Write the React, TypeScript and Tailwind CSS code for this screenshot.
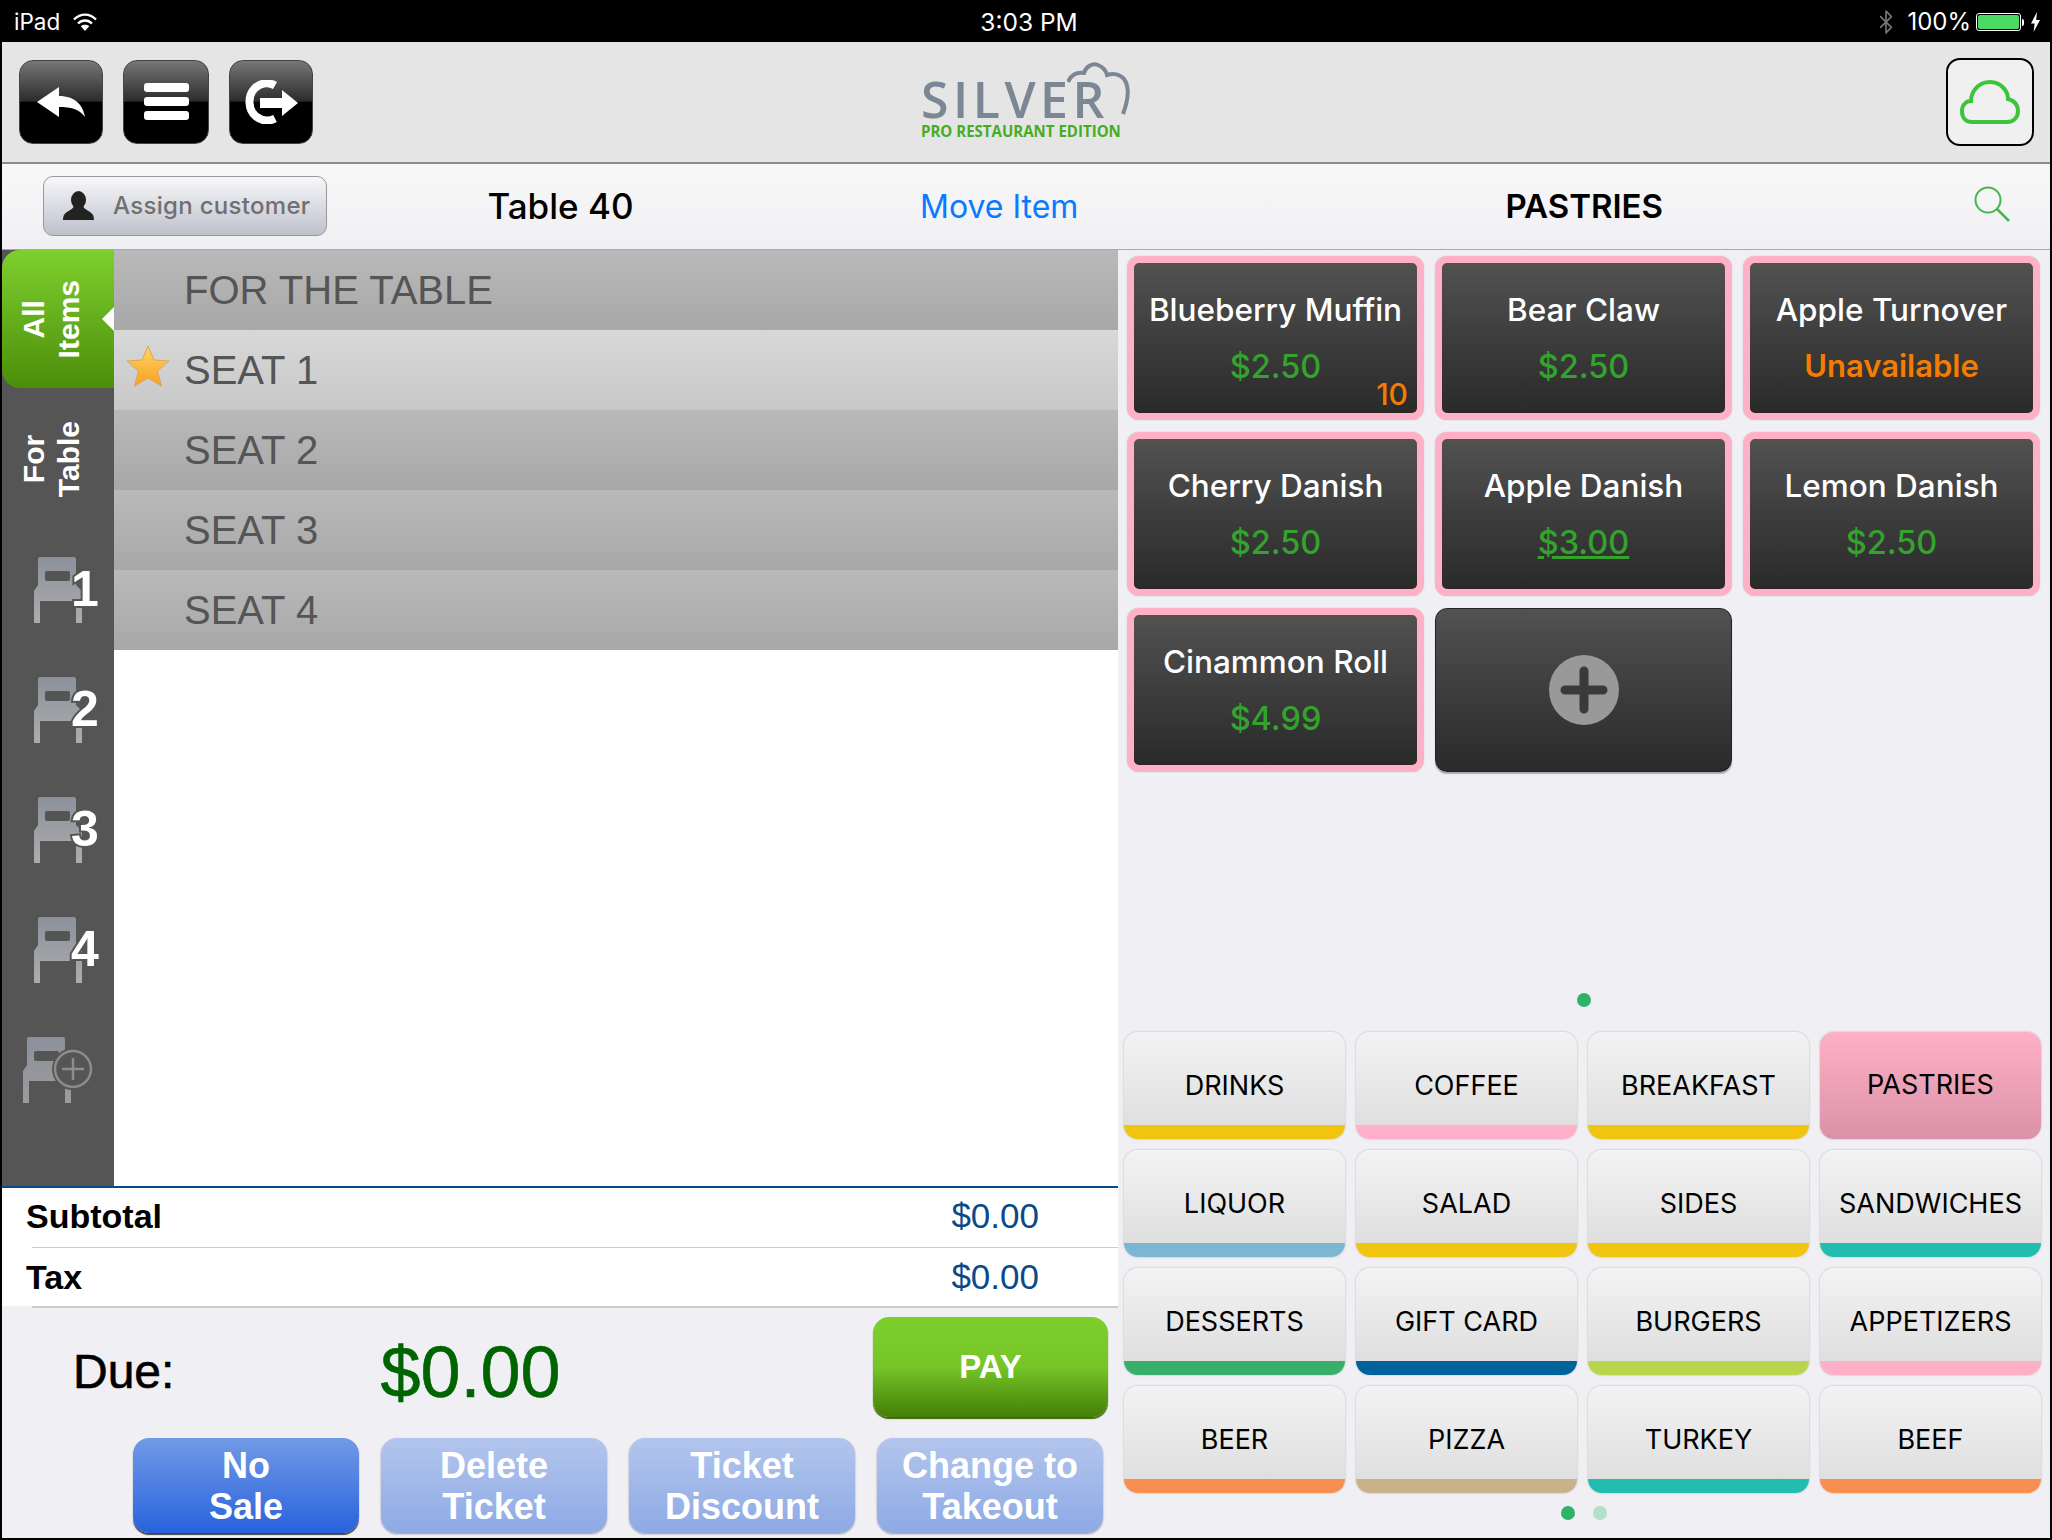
import React from 'react';
import { Bluetooth } from 'lucide-react';

const ITEMS = [
  { name: 'Blueberry Muffin', price: '$2.50', count: '10' },
  { name: 'Bear Claw', price: '$2.50' },
  { name: 'Apple Turnover', unavailable: true },
  { name: 'Cherry Danish', price: '$2.50' },
  { name: 'Apple Danish', price: '$3.00', underline: true },
  { name: 'Lemon Danish', price: '$2.50' },
  { name: 'Cinammon Roll', price: '$4.99' },
];

const CATEGORIES = [
  { label: 'DRINKS', bar: 'bg-[#f1c40f]' },
  { label: 'COFFEE', bar: 'bg-[#ffb0c8]' },
  { label: 'BREAKFAST', bar: 'bg-[#f1c40f]' },
  { label: 'PASTRIES', active: true },
  { label: 'LIQUOR', bar: 'bg-[#7bb6d3]' },
  { label: 'SALAD', bar: 'bg-[#f1c40f]' },
  { label: 'SIDES', bar: 'bg-[#f1c40f]' },
  { label: 'SANDWICHES', bar: 'bg-[#22bdaf]' },
  { label: 'DESSERTS', bar: 'bg-[#38b06c]' },
  { label: 'GIFT CARD', bar: 'bg-[#00629b]' },
  { label: 'BURGERS', bar: 'bg-[#b8d54b]' },
  { label: 'APPETIZERS', bar: 'bg-[#ffb0c8]' },
  { label: 'BEER', bar: 'bg-[#f78f50]' },
  { label: 'PIZZA', bar: 'bg-[#c9b18a]' },
  { label: 'TURKEY', bar: 'bg-[#22bdaf]' },
  { label: 'BEEF', bar: 'bg-[#f78f50]' },
];

const SEATS = ['FOR THE TABLE', 'SEAT 1', 'SEAT 2', 'SEAT 3', 'SEAT 4'];

const ChairPath = () => (
  <path
    fillRule="evenodd"
    d="M6 0H40a2 2 0 0 1 2 2V28L48 34V66H42V44H6V66H0V34L4 28V2a2 2 0 0 1 2-2ZM13 14a2 2 0 0 0-2 2v6a2 2 0 0 0 2 2H34a2 2 0 0 0 2-2V16a2 2 0 0 0-2-2Z"
  />
);

const Chair = ({ n }: { n: number }) => (
  <div className="relative h-[66px] w-[48px]">
    <svg width="48" height="66" viewBox="0 0 48 66">
      <defs>
        <linearGradient id={`chair${n}`} x1="0" y1="0" x2="0" y2="1">
          <stop offset="0" stopColor="#8b909b" />
          <stop offset="1" stopColor="#adadad" />
        </linearGradient>
      </defs>
      <g fill={`url(#chair${n})`}>
        <ChairPath />
      </g>
    </svg>
    <span className="absolute left-[37px] top-[7px] text-[50px] font-bold leading-[50px] text-white [font-family:'Liberation_Sans',Arial,sans-serif] [-webkit-text-stroke:4px_#555555] [paint-order:stroke_fill]">
      {n}
    </span>
  </div>
);

const HeaderButton = ({ children, w = 'w-[84px]' }: { children: React.ReactNode; w?: string }) => (
  <div className={`flex h-[84px] ${w} items-center justify-center rounded-[14px] border border-[#444] bg-[linear-gradient(180deg,#777_0%,#2c2c2c_49%,#000_50%,#000_100%)]`}>
    {children}
  </div>
);

const ActionButton = ({ top, bottom, active }: { top: string; bottom: string; active?: boolean }) => (
  <div
    className={`flex h-[95px] w-[226px] flex-col items-center justify-center rounded-[16px] pt-[1px] text-[36px] font-bold leading-[41px] text-white ${
      active
        ? 'bg-linear-to-b from-[#7199e6] to-[#2862dc] shadow-[0_2px_1px_#444]'
        : 'bg-linear-to-b from-[#b2c5ec] to-[#8eaae5] shadow-[0_1px_2px_#999]'
    }`}
  >
    <span>{top}</span>
    <span>{bottom}</span>
  </div>
);

export default function App() {
  return (
    <div className="flex h-[1540px] w-[2052px] flex-col overflow-hidden bg-black px-[2px] pb-[2px] [font-family:Inter,sans-serif]">
      {/* status bar */}
      <div className="-mx-[2px] grid h-[42px] shrink-0 grid-cols-[1fr_auto_1fr] items-center pl-[14px] pr-[12px] pt-[2px] text-[22.5px] text-white">
        <div className="flex items-center gap-[13px]">
          <span>iPad</span>
          <svg width="24" height="18" viewBox="0 0 24 18" fill="none" stroke="white" strokeWidth="2.4">
            <path d="M1 6.5C7.5 0 16.5 0 23 6.5" />
            <path d="M5 10.5C9 6.5 15 6.5 19 10.5" />
            <path d="M12 18L7.8 13.2C10 11.4 14 11.4 16.2 13.2Z" fill="white" stroke="none" />
          </svg>
        </div>
        <span className="ml-[4px] text-[24.5px]">3:03 PM</span>
        <div className="flex items-center justify-end">
          <Bluetooth size={26} strokeWidth={1.5} className="mr-[8px] text-[#777]" />
          <span className="text-[24px]">100%</span>
          <div className="ml-[5px] flex h-[18px] w-[45px] items-center rounded-[3px] border border-white p-px">
            <div className="h-full w-full rounded-[2px] bg-[#4cd964]" />
          </div>
          <div className="ml-[1px] h-[7px] w-[2px] rounded-r-sm bg-white" />
          <svg className="ml-[7px]" width="9" height="20" viewBox="0 0 9 20" fill="white">
            <path d="M6 0L0 11.5H3.6L2.6 20L9 8H5.2Z" />
          </svg>
        </div>
      </div>

      {/* top bar */}
      <div className="flex h-[122px] shrink-0 items-center border-b-2 border-[#8a8a8a] bg-[#e5e5e5] pb-[1px] pl-[17px] pr-[16px]">
        <div className="flex items-center gap-[20px]">
          <HeaderButton>
            <svg width="48" height="30" viewBox="0 0 48 30" fill="white">
              <path d="M0 15L22 0V9C38 9 46 18 48 30C42 22 34 20 22 20V30Z" />
            </svg>
          </HeaderButton>
          <div className="-my-1">
            <HeaderButton w="w-[86px]">
              <div className="flex w-[45px] flex-col gap-[5px]">
                <div className="h-[9px] rounded-[3px] bg-white" />
                <div className="h-[9px] rounded-[3px] bg-white" />
                <div className="h-[9px] rounded-[3px] bg-white" />
              </div>
            </HeaderButton>
          </div>
          <HeaderButton>
            <svg width="54" height="44" viewBox="0 0 54 44" fill="none">
              <path d="M31 5.5C25 2 17 2.500 11 8C3 16 4 30 12 36.500C18 41 25 41.500 31 38.500" stroke="white" strokeWidth="8" />
              <path d="M16 18H38V10L54 23L38 36V28H16Z" fill="white" />
            </svg>
          </HeaderButton>
        </div>

        {/* logo */}
        <div className="relative ml-[608px] h-[76px] w-[210px]">
          <svg className="absolute left-[146px] -top-[2px]" width="64" height="56" viewBox="0 0 64 56" fill="none" stroke="#7b8794" strokeWidth="4">
            <path d="M1 20C4 13 10 10 17 11C19 4 26 1 31 3C36 5 39 9 40 13C46 11 53 12 57 17C62 24 62 36 56 52" />
          </svg>
          <span className="absolute left-0 top-[12px] text-[50px] font-semibold leading-[46px] tracking-[4.5px] text-[#7b8794] [font-family:'Open_Sans',sans-serif]">
            SILVER
          </span>
          <span className="absolute left-0 top-[59px] origin-left scale-x-[0.97] whitespace-nowrap text-[15.5px] font-bold leading-[16px] text-[#46ad23] [font-family:'Open_Sans',sans-serif]">
            PRO RESTAURANT EDITION
          </span>
        </div>

        <div className="ml-auto flex h-[88px] w-[88px] items-center justify-center rounded-[14px] border-2 border-black bg-[#f0f0f0]">
          <svg width="60" height="44" viewBox="0 0 60 44" fill="none" stroke="#3cc53c" strokeWidth="4">
            <path d="M12 42C5 42 2 37 2 31C2 25 6 21 11 21C11 12 18 2 30 2C41 2 48 11 48 19C54 20 58 25 58 31C58 37 54 42 47 42Z" />
          </svg>
        </div>
      </div>

      {/* sub bar */}
      <div className="flex h-[86px] shrink-0 items-center border-b border-[#aaa] bg-linear-to-b from-[#f8f8f8] to-[#f0f0f4] pb-[2px] pl-[41px] pr-[40px]">
        <div className="flex h-[60px] w-[284px] items-center rounded-[10px] border border-[#999] bg-linear-to-b from-[#f8f8fa] to-[#bdc1cb] pl-[19px]">
          <svg width="31" height="29" viewBox="0 0 31 29" fill="#222">
            <ellipse cx="15.500" cy="9" rx="7.500" ry="9" />
            <path d="M11 15C10 19 3 20 1 24C0 26 0 29 0 29H31S31 26 30 24C28 20 21 19 20 15Z" />
          </svg>
          <span className="ml-[19px] text-[24px] font-medium tracking-[0.3px] text-[#707070]">Assign customer</span>
        </div>
        <div className="w-[467px] pt-[2px] text-center text-[35px] font-medium text-black">Table 40</div>
        <div className="ml-[126px] pt-[2px] text-[32px] text-[#0a7aff]">Move Item</div>
        <div className="ml-[427px] pt-[2px] text-[33px] font-semibold text-black">PASTRIES</div>
        <svg className="ml-auto mb-[4px]" width="36" height="36" viewBox="0 0 36 36" fill="none" stroke="#45b649" strokeWidth="2">
          <circle cx="14" cy="14" r="12.500" />
          <path d="M23 23L35 35" strokeWidth="2.500" />
        </svg>
      </div>

      <div className="flex min-h-0 flex-1">
        {/* left column */}
        <div className="flex w-[1116px] shrink-0 flex-col bg-[#efeff4] [font-family:'Liberation_Sans',Arial,sans-serif]">
          <div className="flex min-h-0 flex-1 bg-white">
            <div className="flex w-[112px] shrink-0 flex-col bg-[#555555] text-white">
              <div className="relative flex h-[138px] items-center justify-center rounded-l-[18px] bg-linear-to-b from-[#7ed02e] to-[#4c8e08] pr-[14px] text-[30px] font-bold leading-[35px]">
                <span className="rotate-180 text-center [writing-mode:vertical-rl]">
                  All
                  <br />
                  Items
                </span>
                <div className="absolute right-0 top-[57px] h-0 w-0 border-y-[12px] border-r-[12px] border-y-transparent border-r-white" />
              </div>
              <div className="flex h-[142px] items-center justify-center pr-[14px] text-[30px] font-bold leading-[35px]">
                <span className="rotate-180 text-center [writing-mode:vertical-rl]">
                  For
                  <br />
                  Table
                </span>
              </div>
              {[1, 2, 3, 4].map((n) => (
                <div key={n} className="flex h-[120px] items-center justify-center">
                  <Chair n={n} />
                </div>
              ))}
              <div className="flex h-[120px] items-center justify-center">
                <svg width="70" height="66" viewBox="0 0 70 66">
                  <defs>
                    <linearGradient id="chairAdd" x1="0" y1="0" x2="0" y2="1">
                      <stop offset="0" stopColor="#8b909b" />
                      <stop offset="1" stopColor="#9c9c9c" />
                    </linearGradient>
                  </defs>
                  <g fill="url(#chairAdd)">
                    <ChairPath />
                  </g>
                  <circle cx="50" cy="32" r="21" fill="#555555" />
                  <circle cx="50" cy="32" r="18" fill="none" stroke="#8c8c8c" strokeWidth="2.500" />
                  <path d="M50 21V43M39 32H61" stroke="#8c8c8c" strokeWidth="2.500" />
                </svg>
              </div>
            </div>

            <div className="flex-1">
              {SEATS.map((seat, i) => (
                <div
                  key={seat}
                  className={`relative flex h-[80px] items-center pl-[70px] text-[40px] text-[#555] ${
                    i === 1
                      ? 'bg-linear-to-b from-[#d8d8d8] to-[#c8c8c8]'
                      : 'bg-linear-to-b from-[#b9b9b9] to-[#a8a8a8]'
                  }`}
                >
                  {i === 1 && (
                    <svg className="absolute left-[12px] top-[15px]" width="44" height="42" viewBox="0 0 44 42">
                      <defs>
                        <linearGradient id="star" x1="0" y1="0" x2="0" y2="1">
                          <stop offset="0" stopColor="#ffd768" />
                          <stop offset="1" stopColor="#f6a01e" />
                        </linearGradient>
                      </defs>
                      <path
                        d="M22 1L28 15L43 16L31.500 26L35.500 41L22 33L8.500 41L12.500 26L1 16L16 15Z"
                        fill="url(#star)"
                        stroke="#d9a65a"
                        strokeWidth="1"
                      />
                    </svg>
                  )}
                  {seat}
                </div>
              ))}
            </div>
          </div>

          {/* totals */}
          <div className="h-[120px] shrink-0 border-t-2 border-[#0a4a8a] bg-white">
            <div className="flex h-[59px] items-center justify-between pb-[2px] pl-[24px] pr-[79px]">
              <span className="text-[34px] font-bold text-black">Subtotal</span>
              <span className="text-[35px] text-[#0a4a8a]">$0.00</span>
            </div>
            <div className="ml-[30px] h-px bg-[#ccc]" />
            <div className="flex h-[58px] items-center justify-between pl-[24px] pr-[79px]">
              <span className="text-[34px] font-bold text-black">Tax</span>
              <span className="text-[35px] text-[#0a4a8a]">$0.00</span>
            </div>
          </div>
          <div className="ml-[30px] h-[2px] shrink-0 bg-[#ccc]" />

          {/* due */}
          <div className="flex h-[230px] shrink-0 flex-col pl-[131px] pr-[10px]">
            <div className="-ml-[60px] mt-[9px] flex h-[100px] items-center">
              <span className="pt-[10px] text-[48px] leading-[90px] text-black [-webkit-text-stroke:0.6px_#000]">Due:</span>
              <span className="ml-[206px] pt-[10px] text-[72px] leading-[90px] text-[#006400] [-webkit-text-stroke:0.6px_#006400]">$0.00</span>
              <div className="ml-auto flex h-[100px] w-[235px] items-center justify-center rounded-[16px] bg-linear-to-b from-[#7dcf2c] via-[#75c528] to-[#457f05] text-[33px] font-bold text-white shadow-[0_2px_1px_#3b6a05]">
                PAY
              </div>
            </div>
            <div className="mt-[21px] flex gap-[22px]">
              <ActionButton top="No" bottom="Sale" active />
              <ActionButton top="Delete" bottom="Ticket" />
              <ActionButton top="Ticket" bottom="Discount" />
              <ActionButton top="Change to" bottom="Takeout" />
            </div>
          </div>
        </div>

        {/* right column */}
        <div className="flex flex-1 flex-col items-start bg-[#efeff4] pl-[6px]">
          <div className="ml-[3px] mt-[6px] grid grid-cols-[repeat(3,297px)] gap-x-[11px] gap-y-[12px]">
            {ITEMS.map((item) => (
              <div
                key={item.name}
                className="relative flex h-[164px] flex-col items-center rounded-[12px] border-[7px] border-[#ffb0c6] bg-linear-to-b from-[#525252] to-[#2a2a2a] pt-[27px] shadow-[0_0_1px_#999]"
              >
                <span className="text-[31.5px] font-medium leading-[40px] text-white">{item.name}</span>
                {item.unavailable ? (
                  <span className="mt-[16px] text-[31px] font-semibold leading-[40px] text-[#f57c00]">Unavailable</span>
                ) : (
                  <span className={`mt-[17px] text-[32.5px] font-medium leading-[40px] text-[#34a32e] ${item.underline ? 'underline' : ''}`}>
                    {item.price}
                  </span>
                )}
                {item.count && (
                  <span className="absolute bottom-[3px] right-[9px] text-[30px] font-medium leading-[32px] text-[#f57c00]">
                    {item.count}
                  </span>
                )}
              </div>
            ))}
            <div className="flex h-[164px] items-center justify-center rounded-[12px] border border-[#222] bg-linear-to-b from-[#525252] to-[#2a2a2a] shadow-[0_2px_1px_#aaa]">
              <svg width="70" height="70" viewBox="0 0 70 70">
                <circle cx="35" cy="35" r="35" fill="#999" />
                <path d="M35 16V54M16 35H54" stroke="#3a3a3a" strokeWidth="9" strokeLinecap="round" />
              </svg>
            </div>
          </div>

          <div className="mt-auto flex w-[920px] justify-center">
            <div className="h-[14px] w-[14px] rounded-full bg-[#2fb36a]" />
          </div>

          <div className="mt-[25px] grid grid-cols-[repeat(4,221px)] gap-[11px]">
            {CATEGORIES.map((cat) => (
              <div
                key={cat.label}
                className={`flex h-[107px] flex-col overflow-hidden rounded-[14px] text-[27px] text-black shadow-[0_0_2px_#aaa] ${
                  cat.active ? 'bg-linear-to-b from-[#ffb0c6] to-[#da92a8]' : 'bg-linear-to-b from-[#f3f3f3] to-[#dcdcdc]'
                }`}
              >
                <div className={`flex flex-1 items-center justify-center ${cat.active ? '' : 'pt-[16px]'}`}>{cat.label}</div>
                {cat.bar && <div className={`h-[14px] ${cat.bar}`} />}
              </div>
            ))}
          </div>

          <div className="mb-[18px] mt-[13px] flex w-[920px] justify-center gap-[18px]">
            <div className="h-[14px] w-[14px] rounded-full bg-[#2fb36a]" />
            <div className="h-[14px] w-[14px] rounded-full bg-[#b4dfc8]" />
          </div>
        </div>
      </div>
    </div>
  );
}
